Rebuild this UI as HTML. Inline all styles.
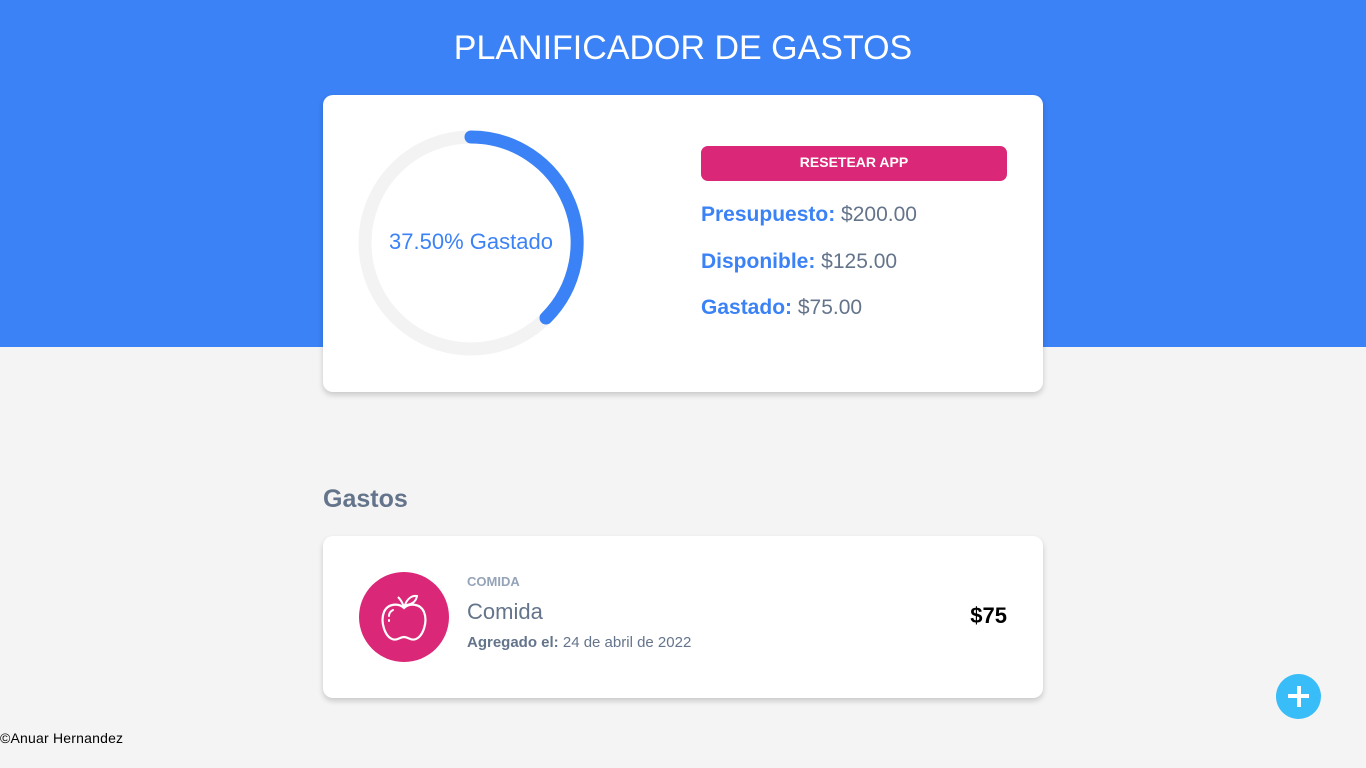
<!DOCTYPE html>
<html><head><meta charset="utf-8"><style>
*{box-sizing:border-box;margin:0;padding:0}
body{width:1366px;height:768px;background:#f4f4f4;font-family:"Liberation Sans",sans-serif;position:relative;overflow:hidden}
.hdr{position:absolute;left:0;top:0;width:1366px;height:347px;background:#3b82f6}
h1{position:absolute;top:29px;left:0;width:1366px;text-align:center;color:#fff;font-size:34px;font-weight:400;letter-spacing:0}
.card{position:absolute;left:323px;width:720px;background:#fff;border-radius:10px;box-shadow:0 3px 6px rgba(0,0,0,.18)}
.btn{position:absolute;left:701px;top:146px;width:306px;height:35px;background:#db2777;border-radius:7px;color:#fff;font-weight:700;font-size:14px;text-align:center;line-height:33px}
.row{position:absolute;left:701px;font-size:21px;color:#64748b}
.row b{color:#3b82f6}
</style></head><body>
<div class="hdr"></div>
<h1>PLANIFICADOR DE GASTOS</h1>
<div class="card" style="top:95px;height:297px"></div>
<svg style="position:absolute;left:0;top:0" width="1366" height="768">
<circle cx="471" cy="243" r="106" fill="none" stroke="#f3f3f3" stroke-width="13"/>
<path d="M471 137 A106 106 0 0 1 546 318" fill="none" stroke="#3b82f6" stroke-width="13" stroke-linecap="round"/>
<text x="471" y="249" text-anchor="middle" font-family="Liberation Sans" font-size="22" fill="#3b82f6">37.50% Gastado</text>
</svg>
<div class="btn">RESETEAR APP</div>
<div class="row" style="top:203px"><b>Presupuesto:</b> $200.00</div>
<div class="row" style="top:250px"><b>Disponible:</b> $125.00</div>
<div class="row" style="top:296px"><b>Gastado:</b> $75.00</div>
<div style="position:absolute;left:323px;top:485px;font-size:25px;font-weight:700;color:#64748b">Gastos</div>
<div class="card" style="top:536px;height:162px"></div>
<svg style="position:absolute;left:359px;top:572px" width="90" height="90" viewBox="0 0 90 90">
<circle cx="45" cy="45" r="45" fill="#db2777"/>
<path d="M45 36 C40 31 29 31 25 40 C21 50 26 64 33 67 C38 69 41 65 45 65 C49 65 52 69 57 67 C64 64 69 50 65 40 C61 31 50 31 45 36 Z" fill="none" stroke="#fff" stroke-width="2.2"/>
<path d="M45 36 C44 31 42 28 39 25 M46 33 C48 27 53 23 58 24 C57 30 52 33 46 33 Z" fill="none" stroke="#fff" stroke-width="2"/>
<path d="M30 44 C30 41 32 39 34 38 M30 48 L30 49" fill="none" stroke="#fff" stroke-width="2" stroke-linecap="round"/>
</svg>
<div style="position:absolute;left:467px;top:574px;font-size:13px;font-weight:700;color:#94a3b8">COMIDA</div>
<div style="position:absolute;left:467px;top:599px;font-size:22px;color:#64748b">Comida</div>
<div style="position:absolute;left:467px;top:634px;font-size:15px;color:#64748b"><b>Agregado el:</b> 24 de abril de 2022</div>
<div style="position:absolute;left:900px;width:107px;text-align:right;top:603px;font-size:22px;font-weight:700;color:#000">$75</div>
<div style="position:absolute;left:1276px;top:674px;width:45px;height:45px;border-radius:50%;background:#38bdf8">
<div style="position:absolute;left:12px;top:20px;width:21px;height:4px;background:#fff"></div>
<div style="position:absolute;left:20.5px;top:12px;width:4px;height:21px;background:#fff"></div>
</div>
<div style="position:absolute;left:0;top:730px;font-size:14px;color:#000;letter-spacing:0.2px">©Anuar Hernandez</div>
</body></html>
